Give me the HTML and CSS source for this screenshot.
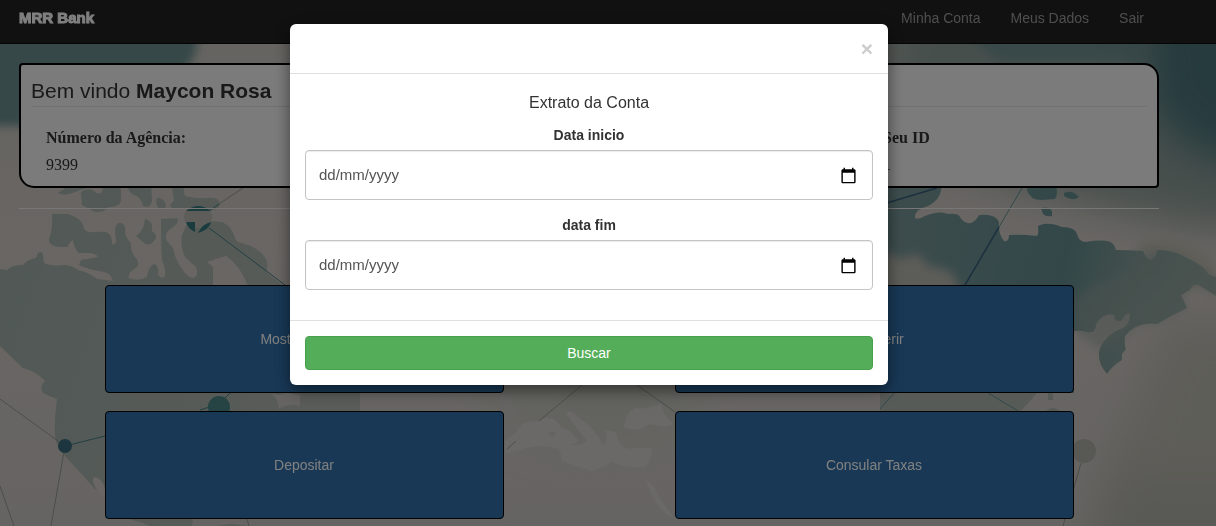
FILE: index.html
```html
<!DOCTYPE html>
<html lang="pt-BR">
<head>
<meta charset="utf-8">
<meta name="viewport" content="width=device-width, initial-scale=1">
<title>MRR Bank</title>
<link rel="stylesheet" href="styles.css">
</head>
<body>
<svg class="map" viewBox="0 0 1216 526" preserveAspectRatio="xMidYMid slice" aria-hidden="true">
  <defs>
    <linearGradient id="sky" x1="0" y1="0" x2="0" y2="1">
      <stop offset="0" stop-color="#c9c7c0"/><stop offset=".45" stop-color="#d2ccc7"/><stop offset="1" stop-color="#cdc9c5"/>
    </linearGradient>
    <linearGradient id="west" gradientUnits="userSpaceOnUse" x1="0" y1="300" x2="300" y2="400">
      <stop offset="0" stop-color="#a2b1ab"/><stop offset="1" stop-color="#b2b8b2"/>
    </linearGradient>
    <linearGradient id="east" gradientUnits="userSpaceOnUse" x1="880" y1="220" x2="1216" y2="300">
      <stop offset="0" stop-color="#7c9a9b"/><stop offset=".55" stop-color="#668f91"/><stop offset=".72" stop-color="#829e9b"/><stop offset="1" stop-color="#98aaa4"/>
    </linearGradient>
    <linearGradient id="cape" x1="0" y1="0" x2="0" y2="1">
      <stop offset="0" stop-color="#8fa39d"/><stop offset="1" stop-color="#9ca8a1"/>
    </linearGradient>
    <filter id="soft" filterUnits="userSpaceOnUse" x="-100" y="-100" width="1420" height="740"><feGaussianBlur stdDeviation="20"/></filter>
    <filter id="softer" filterUnits="userSpaceOnUse" x="-100" y="-100" width="1420" height="740"><feGaussianBlur stdDeviation="5"/></filter>
  </defs>
  <rect width="1216" height="526" fill="url(#sky)"/>
  <path d="M-40 0H205L195 55 150 120 60 135 20 126-40 126Z" fill="#6c9191" filter="url(#softer)"/>
  <path d="M890 0H1300V225L1200 228 1100 205 1000 180 880 120Z" fill="#8f9f9a" filter="url(#soft)"/>
  <path d="M1140 0H1300V180L1190 150 1150 110Z" fill="#4d777d" filter="url(#soft)"/>
  <path d="M960 30H1150L1140 62H1000Z" fill="#668c8f" opacity=".7" filter="url(#softer)"/>
  <path d="M1170 320H1300V600H1070L1100 480Z" fill="#bdbcb2" filter="url(#soft)"/>
  <path d="M1120 480H1300V560H1100Z" fill="#abaca6" opacity=".6" filter="url(#soft)"/>
  <path d="M480 360H700V430L590 450 480 410Z" fill="#c5c6be" filter="url(#soft)"/>
  <path d="M1138 245Q1140 236 1155 238Q1190 234 1216 262V290L1190 288 1150 262Z" fill="#c2bfb3" filter="url(#softer)"/>

  <g fill="url(#west)">
    <path d="M0 269 7 270Q12 265 23 265Q28 259 36 258L38 253Q41 251 43 254L44 263Q52 267 62 265Q72 265 78 270Q88 272 97 279L113 281Q111 273 104 272Q89 270 79 265L81 260 98 257Q97 254 90 253L79 253Q74 249 73 240Q68 243 68 247H58Q48 245 49 239Q53 230 52 214H67Q83 218 84 229Q87 233 96 232Q105 231 108 233Q112 235 112 244Q117 245 116 239Q113 226 119 223Q126 222 125 232Q126 239 131 243Q130 251 135 257Q141 263 136 268Q127 273 129 278Q138 282 147 277Q149 265 154 264Q159 265 158 275Q163 280 165 276Q166 269 162 260Q161 244 161 219L177 218Q180 222 173 227Q163 233 167 241Q175 249 175 256Q180 268 186 274Q192 280 195 277Q199 273 196 267L186 258Q180 249 182 235Q187 224 190 218Q205 221 222 222Q230 225 234 235Q236 243 242 243Q260 248 266 259Q269 266 266 272L285 287H360V415H105V500Q99 491 94 488L78 470Q71 463 66 457Q56 447 55 436Q54 420 57 399Q49 396 43 393Q39 386 45 381Q36 371 23 368L0 346Z"/>
    <path d="M58 193Q67 187 77 180H104Q95 187 80 190Q65 197 58 193M82 205 81 192Q86 188 93 190Q99 197 103 190L99 180H118Q122 188 121 201Q119 207 109 207Q102 214 93 211ZM125 180H151L152 201Q150 209 143 206Q141 196 133 195Q127 190 125 180M157 198C162 197 168 203 165 208C160 212 154 205 157 198M171 180H184Q183 192 185 196Q197 199 207 198Q218 197 220 203Q220 210 212 210L186 208 172 208Q168 205 174 201ZM145 219Q153 220 152 231Q159 236 154 241Q148 248 142 241L136 236Q144 231 145 219"/>
    <path d="M105 501Q119 518 140 522L150 526H250L191 519H105Z"/>
  </g>
  <path d="M96 477Q104 480 106 493L105 500Q92 486 93 478M207 262Q218 258 226 256Q240 265 248 286H213V267Z" fill="#d2ccc8"/>
  <path d="M505 440Q516 435 522 424L533 421Q539 422 541 419Q555 415 562 428Q570 429 575 437Q584 442 570 445Q581 446 587 441Q576 427 566 414Q568 408 578 417Q594 427 604 446Q609 435 605 431Q618 429 618 440Q623 451 635 448H652Q651 463 645 467Q626 469 612 462Q605 466 592 471Q575 466 562 461Q561 452 558 449Q538 443 520 450L505 454ZM551 431Q546 434 551 437Q556 437 556 433ZM624 427Q625 413 635 408Q650 410 661 403Q663 416 673 423Q670 430 650 424Q635 434 624 427M646 480Q655 484 658 496L675 519Q655 510 646 480" fill="#ded8d7" fill-rule="evenodd" opacity=".6"/>
  <path d="M500 394Q512 395 514 412L512 420H504V411H500ZM270 393Q279 397 287 393L300 395V406Q289 403 279 409Q278 397 270 393M193 519H246Q218 529 192 526Z" fill="#cdc9c5"/>

  <path d="M880 393H1037L1021 411H880ZM1048 393H1053V400H1048ZM1046 411Q1053 405 1060 411" fill="#afb6b0"/>
  <g fill="url(#east)">
    <path d="M880 180H941Q944 198 928 206Q914 210 915 218Q918 220 925 216Q939 210 948 214Q958 213 960 217Q964 224 971 223Q976 221 979 215Q995 213 999 222Q998 234 1004 241Q1009 242 1009 235Q1020 234 1037 236Q1039 234 1038 226Q1047 221 1062 227Q1075 227 1077 234Q1079 242 1086 242Q1109 238 1114 245L1116 250Q1130 250 1143 251Q1146 259 1151 260Q1157 256 1157 250Q1174 250 1185 257Q1204 265 1209 275L1216 277V296L1202 287Q1194 281 1190 290L1181 295 1187 308Q1172 315 1157 324Q1137 321 1125 336Q1124 345 1126 349L1122 354V360Q1112 366 1107 374Q1096 362 1100 348Q1106 334 1123 328Q1130 324 1130 314Q1126 312 1122 320Q1115 324 1114 315Q1104 312 1096 324Q1096 334 1087 332Q1082 330 1074 331V393H880Z"/>
    <path d="M1029 180H1055Q1059 194 1055 199L1041 200Q1030 200 1027 190M1064 193Q1072 189 1079 197Q1073 202 1064 196M1041 208Q1049 206 1052 211V216Q1046 217 1043 214Z"/>
  </g>
  <path d="M1135 252Q1142 250 1157 250Q1180 250 1192 263L1216 277V296L1202 287Q1194 281 1190 290L1181 295 1187 308 1157 324Q1137 321 1125 336L1100 350 1074 331V300Q1092 283 1110 280Q1126 274 1135 265Z" fill="url(#cape)" opacity=".55" filter="url(#softer)"/>
  <path d="M870 256Q890 250 901 259L916 254Q926 260 928 267Q944 266 953 275Q960 280 961 310H870Z" fill="#b9b9b1" filter="url(#softer)"/>

  <g fill="none" stroke-width="1">
    <path d="M209 228 285 285M209 211 219 204M65 446 105 436M200 410 219 404 230 393" stroke="#427e84"/>
    <path d="M880 205 937 188M965 285 999 227" stroke="#38607e" stroke-width="1.5"/>
    <path d="M999 227 1022 188M988 393 1018 411M894 393 880 409" stroke="#609191"/>
    <path d="M0 399 65 446 51 526M0 486 14 526M219 204 243 188M507 449 516 441M539 421 582 385M637 385 675 412M1081 463 1063 526M247 519 249 526" stroke="#969c91"/>
  </g>
  <ellipse cx="198" cy="217" rx="14" ry="11" fill="#bcbab5"/>
  <path d="M186 211Q198 201 211 211ZM186 222H195V232Q188 229 186 222M198 233Q202 224 211 222Q209 230 198 233" fill="#36787c"/>
  <circle cx="65" cy="446" r="7" fill="#386b7e"/>
  <circle cx="219" cy="407" r="11" fill="#4a8986"/>
  <circle cx="1084" cy="451" r="12" fill="#b1b0a8"/>
</svg>

<header class="navbar">
  <div class="wrap navbar-row">
    <a class="brand" href="#">MRR Bank</a>
    <nav class="nav">
      <a href="#">Minha Conta</a>
      <a href="#">Meus Dados</a>
      <a href="#">Sair</a>
    </nav>
  </div>
</header>

<main class="wrap">
  <section class="account">
    <h1>Bem vindo <strong>Maycon Rosa</strong></h1>
    <dl class="facts">
      <div><dt>Número da Agência:</dt><dd>9399</dd></div>
      <div></div>
      <div></div>
      <div><dt>Seu ID</dt><dd>1</dd></div>
    </dl>
  </section>
  <hr class="rule">
  <div class="actions">
    <button type="button">Mostrar Saldo</button>
    <button type="button">Transferir</button>
    <button type="button">Depositar</button>
    <button type="button">Consular Taxas</button>
  </div>
</main>

<div class="overlay">
  <form class="modal" role="dialog" aria-modal="true" aria-labelledby="modal-title">
    <div class="modal-header">
      <button class="close" type="button" aria-label="Fechar">×</button>
    </div>
    <div class="modal-body">
      <h2 id="modal-title">Extrato da Conta</h2>
      <div class="field">
        <label for="start">Data inicio</label>
        <div class="date">
          <input id="start" type="text" inputmode="numeric" placeholder="dd/mm/yyyy">
          <button type="button" aria-label="Abrir calendário">
            <svg viewBox="0 0 24 24" aria-hidden="true"><path d="M20 3h-1V1h-2v2H7V1H5v2H4c-1.100 0-2 .9-2 2v16c0 1.100.9 2 2 2h16c1.100 0 2-.9 2-2V5c0-1.100-.9-2-2-2zm0 18H4V8h16v13z"/></svg>
          </button>
        </div>
      </div>
      <div class="field">
        <label for="end">data fim</label>
        <div class="date">
          <input id="end" type="text" inputmode="numeric" placeholder="dd/mm/yyyy">
          <button type="button" aria-label="Abrir calendário">
            <svg viewBox="0 0 24 24" aria-hidden="true"><path d="M20 3h-1V1h-2v2H7V1H5v2H4c-1.100 0-2 .9-2 2v16c0 1.100.9 2 2 2h16c1.100 0 2-.9 2-2V5c0-1.100-.9-2-2-2zm0 18H4V8h16v13z"/></svg>
          </button>
        </div>
      </div>
    </div>
    <div class="modal-footer">
      <button class="submit" type="submit">Buscar</button>
    </div>
  </form>
</div>
</body>
</html>
```
FILE: styles.css
```css
* { box-sizing: border-box; }

body {
  margin: 0;
  overflow: hidden;
  color: #333;
  font: 14px/20px "Liberation Sans", Arial, sans-serif;
}

button, input { font: inherit; }
button { cursor: pointer; }

.map {
  position: fixed;
  inset: 0;
  z-index: -1;
  width: 100%;
  height: 100%;
}

.wrap { padding: 0 57px 0 19px; }

.navbar {
  padding-bottom: 7px;
  background: #222;
  border-bottom: 1px solid #080808;
}
.navbar-row {
  display: flex;
  align-items: center;
  justify-content: space-between;
}
.brand {
  color: #fff;
  font: bold 15px/36px Impact, "Liberation Sans", sans-serif;
  text-decoration: none;
  -webkit-text-stroke: 1px #fff;
}
.nav { display: flex; }
.nav a {
  padding: 0 15px;
  color: #9d9d9d;
  line-height: 36px;
  text-decoration: none;
}

.account {
  margin-top: 19px;
  padding: 10px 10px 8px;
  background: #f6f6f6;
  border: 2px solid #000;
  border-radius: 4px 15px;
}
.account h1 {
  margin: 0;
  border-bottom: 1px solid #e2e2e2;
  font-size: 21px;
  font-weight: 400;
  line-height: 31px;
}
.facts {
  display: grid;
  grid-template-columns: repeat(4, 1fr);
  margin: 17px -15px 0 0;
  padding-left: 15px;
  font: 16px/27px "Liberation Serif", "Times New Roman", serif;
}
.facts dt { font-weight: 700; }
.facts dd { margin: 0; }

.rule {
  margin: 20px 0 76px;
  border: 0;
  border-top: 1px solid #eee;
}

.actions {
  display: grid;
  grid-template-columns: 1fr 1fr;
  gap: 18px 0;
  justify-items: center;
}
.actions button {
  width: 70%;
  height: 108px;
  color: #fff;
  background: #3070ac;
  border: 1px solid #000;
  border-radius: 4px;
}

.overlay {
  position: fixed;
  inset: 0;
  padding: 24px 38px 24px 0;
  background: rgba(0, 0, 0, .5);
}
.modal {
  width: 598px;
  max-width: 100%;
  margin: 0 auto;
  background: #fff;
  border-radius: 6px;
  box-shadow: 0 5px 15px rgba(0, 0, 0, .5);
}
.modal-header {
  display: flex;
  justify-content: flex-end;
  padding: 15px;
  border-bottom: 1px solid #e0e0e0;
}
.close {
  padding: 0;
  color: #ccc;
  background: none;
  border: 0;
  font-size: 21px;
  font-weight: 700;
  line-height: 19px;
}
.modal-body {
  padding: 19px 15px 15px;
  text-align: center;
}
.modal-body h2 {
  margin: 0 0 12px;
  font-size: 16px;
  font-weight: 400;
  line-height: 20px;
}
.field { margin-bottom: 15px; }
.field label {
  display: block;
  margin-bottom: 5px;
  font-weight: 700;
  line-height: 20px;
}
.date {
  display: flex;
  align-items: center;
  height: 50px;
  padding: 0 15px 0 13px;
  border: 1px solid #c4c4c4;
  border-radius: 4px;
  box-shadow: inset 0 1px 1px rgba(0, 0, 0, .08);
}
.date input {
  flex: 1;
  min-width: 0;
  padding: 0;
  background: none;
  border: 0;
  outline: 0;
  font-size: 15px;
}
.date input::placeholder { color: #555; opacity: 1; }
.date button {
  display: flex;
  padding: 0;
  background: none;
  border: 0;
}
.date svg { width: 17px; height: 17px; }

.modal-footer {
  padding: 15px;
  border-top: 1px solid #e0e0e0;
}
.submit {
  width: 100%;
  height: 34px;
  color: #fff;
  background: #54ae59;
  border: 1px solid #48a04d;
  border-radius: 4px;
}
```
